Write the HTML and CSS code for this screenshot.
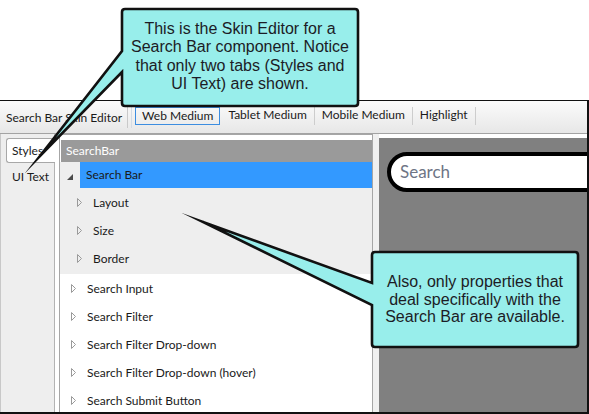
FILE: index.html
```html
<!DOCTYPE html>
<html>
<head>
<meta charset="utf-8">
<link rel="stylesheet" href="styles.css">
</head>
<body>
<div class="page">
  <div class="topspace"></div>
  <div class="app">
    <div class="toolbar">
      <span class="title">Search Bar Skin Editor</span>
      <span class="vsep"></span>
      <span class="vsep second"></span>
      <span class="tb-item active">Web Medium</span>
      <span class="tb-item">Tablet Medium</span>
      <span class="tb-item">Mobile Medium</span>
      <span class="tb-item">Highlight</span>
    </div>
    <div class="main">
      <div class="sidetabs">
        <div class="stab selected">Styles</div>
        <div class="stab">UI Text</div>
      </div>
      <div class="tree">
        <div class="tree-head">SearchBar</div>
        <div class="group">
          <div class="row sel-row">
            <svg class="exp" width="6" height="6" viewBox="0 0 6 6"><path d="M6 0 L6 6 L0 6 Z" fill="#4a4a4a"/></svg>
            <span class="sel-label">Search Bar</span>
          </div>
          <div class="row sub">
            <svg class="col" width="5" height="9" viewBox="0 0 5 9"><path d="M0.5 0.5 L4.5 4.5 L0.5 8.5 Z" fill="none" stroke="#9a9a9a"/></svg>
            <span class="lbl">Layout</span>
          </div>
          <div class="row sub">
            <svg class="col" width="5" height="9" viewBox="0 0 5 9"><path d="M0.5 0.5 L4.5 4.5 L0.5 8.5 Z" fill="none" stroke="#9a9a9a"/></svg>
            <span class="lbl">Size</span>
          </div>
          <div class="row sub">
            <svg class="col" width="5" height="9" viewBox="0 0 5 9"><path d="M0.5 0.5 L4.5 4.5 L0.5 8.5 Z" fill="none" stroke="#9a9a9a"/></svg>
            <span class="lbl">Border</span>
          </div>
        </div>
        <div class="row top">
          <svg class="col" width="5" height="9" viewBox="0 0 5 9"><path d="M0.5 0.5 L4.5 4.5 L0.5 8.5 Z" fill="none" stroke="#9a9a9a"/></svg>
          <span class="lbl">Search Input</span>
        </div>
        <div class="row top">
          <svg class="col" width="5" height="9" viewBox="0 0 5 9"><path d="M0.5 0.5 L4.5 4.5 L0.5 8.5 Z" fill="none" stroke="#9a9a9a"/></svg>
          <span class="lbl">Search Filter</span>
        </div>
        <div class="row top">
          <svg class="col" width="5" height="9" viewBox="0 0 5 9"><path d="M0.5 0.5 L4.5 4.5 L0.5 8.5 Z" fill="none" stroke="#9a9a9a"/></svg>
          <span class="lbl">Search Filter Drop-down</span>
        </div>
        <div class="row top">
          <svg class="col" width="5" height="9" viewBox="0 0 5 9"><path d="M0.5 0.5 L4.5 4.5 L0.5 8.5 Z" fill="none" stroke="#9a9a9a"/></svg>
          <span class="lbl">Search Filter Drop-down (hover)</span>
        </div>
        <div class="row top">
          <svg class="col" width="5" height="9" viewBox="0 0 5 9"><path d="M0.5 0.5 L4.5 4.5 L0.5 8.5 Z" fill="none" stroke="#9a9a9a"/></svg>
          <span class="lbl">Search Submit Button</span>
        </div>
      </div>
      <div class="strip"></div>
      <div class="preview">
        <div class="searchbox">Search</div>
      </div>
    </div>
  </div>

  <svg class="callout-shapes" width="589" height="414" viewBox="0 0 589 414">
    <path d="M125 9 H355 Q358 9 358 12 V103 Q358 106 355 106 H125 Q122 106 122 103 V72 L40 156 L122 51 V12 Q122 9 125 9 Z" fill="#98eeeb" stroke="#111" stroke-width="2.6" stroke-linejoin="miter" stroke-miterlimit="20"/>
    <path d="M375 252 H575 Q578 252 578 255 V344 Q578 347 575 347 H375 Q372 347 372 344 V305 L203 222 L372 283 V255 Q372 252 375 252 Z" fill="#98eeeb" stroke="#111" stroke-width="2.6" stroke-linejoin="miter" stroke-miterlimit="20"/>
  </svg>
  <div class="callout-text c1">This is the Skin Editor for a<br>Search Bar component. Notice<br>that only two tabs (Styles and<br>UI Text) are shown.</div>
  <div class="callout-text c2">Also, only properties that<br>deal specifically with the<br>Search Bar are available.</div>
</div>
</body>
</html>
```

FILE: styles.css
```css
* { box-sizing: border-box; }
html, body { margin: 0; padding: 0; background: #fff; }
body { width: 589px; height: 414px; overflow: hidden; }

.page {
  position: relative;
  width: 589px;
  height: 414px;
  font-family: Lato, "Noto Sans", sans-serif;
  font-size: 12px;
  color: #1a1a1a;
}
.topspace { height: 100px; }

.app {
  width: 589px;
  height: 314px;
  border-top: 1px solid #111;
  border-right: 2px solid #111;
  border-bottom: 2px solid #111;
  display: flex;
  flex-direction: column;
}

.toolbar {
  height: 33px;
  flex: none;
  display: flex;
  align-items: center;
  padding-left: 6px;
  background: linear-gradient(#fbfbfb, #e7e7e7);
  border-bottom: 1px solid #a3a3a3;
}
.title { margin-right: 5px; }
.vsep {
  width: 1px;
  height: 21px;
  background: #c9c9c9;
}
.vsep.second { margin-left: 3px; margin-right: 3px; background: #d4dbe4; }
.tb-item {
  height: 18px;
  line-height: 16px;
  padding: 0 7px;
  border-right: 1px solid #cdcdcd;
  margin-top: -2px;
}
.tb-item.active {
  border: 1px solid #3c8de0;
  padding: 0 6px;
  margin-right: 1px;
}

.main {
  flex: 1;
  display: flex;
  min-height: 0;
  background: #fff;
}

.sidetabs {
  width: 55px;
  flex: none;
  background: #eeeeee;
  border-right: 1px solid #b3b3b3;
  border-left: 1px solid #c8c8c8;
  padding-top: 4px;
  padding-left: 5px;
}
.stab {
  height: 25px;
  line-height: 23px;
  padding-left: 6px;
}
.stab.selected {
  background: #fff;
  border: 1px solid #a8a8a8;
  border-right: none;
  border-radius: 3px 0 0 3px;
  margin-right: -1px;
  padding-left: 5px;
}
.stab:not(.selected) { height: 28px; line-height: 28px; }

.tree {
  width: 314px;
  flex: none;
  margin-left: 4px;
  border: 1px solid #a6a6a6;
  border-bottom: none;
  padding: 5px 0 0 1px;
  overflow: hidden;
}
.tree-head {
  height: 22px;
  line-height: 22px;
  background: #9a9a9a;
  color: #fff;
  padding-left: 5px;
}
.group { background: #eeeeee; margin-left: -1px; padding-left: 1px; padding-bottom: 2px; }
.row {
  height: 28px;
  display: flex;
  align-items: center;
}
.sel-row { height: 26px; padding-left: 6px; }
.exp { flex: none; margin-top: 3px; }
.sel-label {
  flex: 1;
  align-self: stretch;
  margin-left: 7px;
  background: #3399ff;
  padding-left: 6px;
  line-height: 26px;
}
.row.sub { padding-left: 16px; }
.row.top { padding-left: 10px; }
.col { flex: none; }
.lbl { margin-left: 11px; }

.strip {
  width: 6px;
  flex: none;
  background: #f0f0f0;
}
.preview {
  flex: 1;
  margin-top: 4px;
  background: #808080;
  overflow: hidden;
  padding-top: 14px;
  padding-left: 8px;
}
.searchbox {
  width: 260px;
  height: 40px;
  background: #fff;
  border: 4px solid #000;
  border-radius: 22px;
  padding-left: 9px;
  line-height: 32px;
  font-family: Lato, "DejaVu Sans", sans-serif;
  font-size: 17px;
  color: #6e7585;
}

.callout-shapes {
  position: absolute;
  left: 0;
  top: 0;
}
.callout-text {
  position: absolute;
  text-align: center;
  font-family: "Liberation Sans", Arial, sans-serif;
  font-size: 16px;
  color: #1c1c26;
}
.c1 { left: 122px; top: 20px; width: 236px; line-height: 18.3px; }
.c2 { left: 372px; top: 273px; width: 206px; line-height: 17.5px; }
```
